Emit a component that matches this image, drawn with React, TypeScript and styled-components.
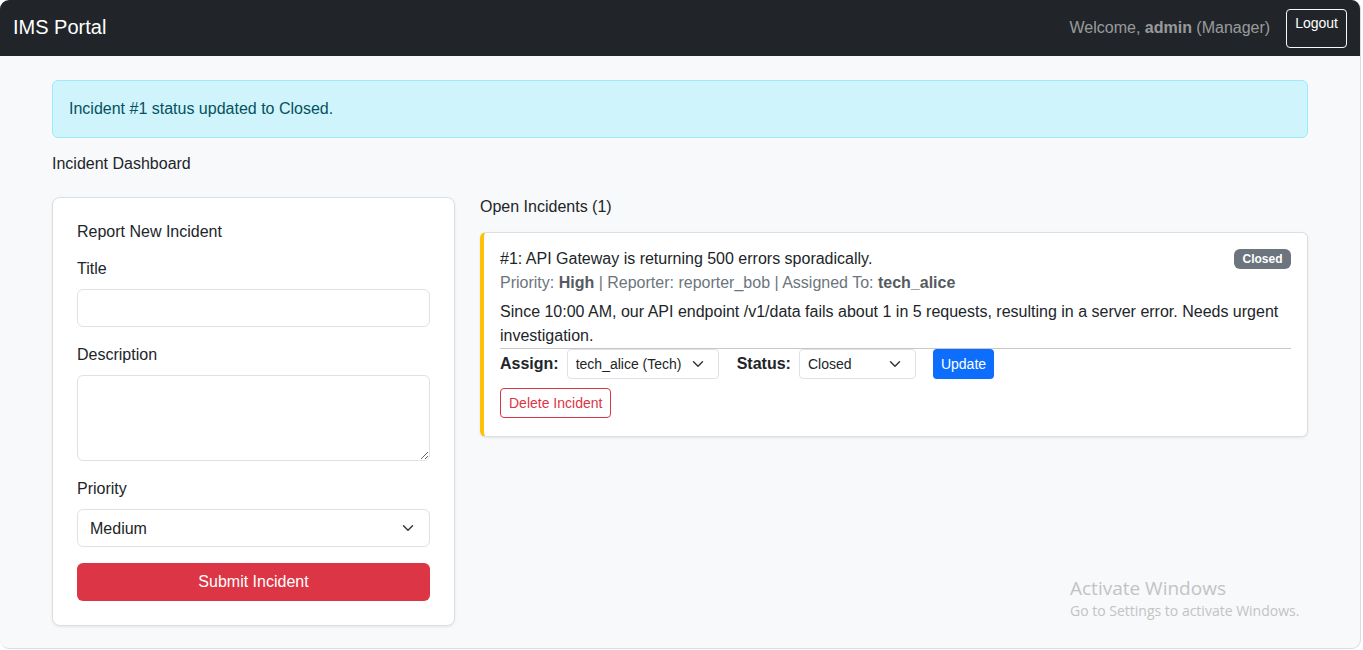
import React from "react";
import styled, { createGlobalStyle } from "styled-components";

const GlobalStyle = createGlobalStyle`
  html, body { margin: 0; padding: 0; background: #ffffff; }
  body { font-family: "Liberation Sans", Arial, sans-serif; color: #212529; }
  * { box-sizing: border-box; }
`;

const chevron =
  "url(\"data:image/svg+xml,%3csvg xmlns='http://www.w3.org/2000/svg' viewBox='0 0 16 16'%3e%3cpath fill='none' stroke='%23343a40' stroke-linecap='round' stroke-linejoin='round' stroke-width='2' d='m2 5 6 6 6-6'/%3e%3c/svg%3e\")";

const Frame = styled.div`
  position: relative;
  width: 1361px;
  height: 649px;
  background: #f8f9fa;
  border-right: 1px solid #dcdcdc;
  border-bottom: 1px solid #dcdcdc;
  border-radius: 9px;
  overflow: hidden;
  display: flex;
  flex-direction: column;
`;

const Navbar = styled.nav`
  height: 56px;
  flex: none;
  background: #212529;
  display: flex;
  align-items: center;
  justify-content: space-between;
  padding: 0 13px 0 13px;
`;

const Brand = styled.div`
  color: #ffffff;
  font-size: 20px;
  line-height: 24px;
  margin-top: -2px;
`;

const NavRight = styled.div`
  display: flex;
  align-items: center;
  gap: 16px;
`;

const NavText = styled.span`
  color: rgba(255, 255, 255, 0.55);
  font-size: 16px;
  line-height: 24px;
  b { font-weight: 700; }
`;

const LogoutButton = styled.button`
  font-family: inherit;
  font-size: 14px;
  line-height: 21px;
  color: #ffffff;
  background: transparent;
  border: 1px solid #f8f9fa;
  border-radius: 4px;
  padding: 3px 8px 13px;
`;

const Container = styled.main`
  width: 1256px;
  margin: 24px 0 0 52px;
`;

const Alert = styled.div`
  background: #cff4fc;
  border: 1px solid #9eeaf9;
  color: #055160;
  border-radius: 6px;
  padding: 16px;
  font-size: 16px;
  line-height: 24px;
  margin-bottom: 14px;
`;

const PageTitle = styled.div`
  font-size: 16px;
  line-height: 24px;
  margin-bottom: 21px;
`;

const Row = styled.div`
  display: grid;
  grid-template-columns: 403px 1fr;
  column-gap: 25px;
  align-items: start;
`;

const Card = styled.div`
  background: #ffffff;
  border: 1px solid #dcdfe2;
  border-radius: 8px;
  box-shadow: 0 1px 3px rgba(0, 0, 0, 0.08);
  padding: 24px 24px 24px;
  display: flex;
  flex-direction: column;
`;

const CardHeading = styled.div`
  font-size: 16px;
  line-height: 20px;
  margin-bottom: 15px;
`;

const Label = styled.label`
  font-size: 16px;
  line-height: 24px;
  margin-bottom: 8px;
`;

const Input = styled.input`
  height: 38px;
  width: 100%;
  border: 1px solid #dee2e6;
  border-radius: 6px;
  background: #fff;
  margin-bottom: 16px;
  font: inherit;
`;

const TextArea = styled.textarea`
  height: 86px;
  width: 100%;
  border: 1px solid #dee2e6;
  border-radius: 6px;
  background: #fff;
  margin-bottom: 16px;
  font: inherit;
  display: block;
`;

const Select = styled.select<{ $small?: boolean; $w?: number }>`
  appearance: none;
  -webkit-appearance: none;
  font-family: inherit;
  color: #212529;
  background-color: #fff;
  background-image: ${chevron};
  background-repeat: no-repeat;
  background-size: 16px 12px;
  border: 1px solid #dee2e6;
  border-radius: ${(p) => (p.$small ? "4px" : "6px")};
  font-size: ${(p) => (p.$small ? "14px" : "16px")};
  height: ${(p) => (p.$small ? "30px" : "38px")};
  padding: ${(p) => (p.$small ? "0 30px 0 8px" : "0 36px 0 12px")};
  background-position: right ${(p) => (p.$small ? "12px" : "13px")} center;
  width: ${(p) => (p.$w ? `${p.$w}px` : "100%")};
`;

const SubmitButton = styled.button`
  margin-top: 16px;
  height: 38px;
  width: 100%;
  background: #dc3545;
  border: none;
  border-radius: 6px;
  color: #fff;
  font-family: inherit;
  font-size: 16px;
`;

const RightCol = styled.section`
  display: flex;
  flex-direction: column;
`;

const SectionTitle = styled.div`
  font-size: 16px;
  line-height: 24px;
  margin: -2px 0 13px;
`;

const IncidentCard = styled.div<{ $accent: string }>`
  background: #fff;
  border: 1px solid #dcdfe2;
  border-left: 4px solid ${(p) => p.$accent};
  border-radius: 6px;
  box-shadow: 0 1px 3px rgba(0, 0, 0, 0.08);
  padding: 16px 16px 18px 16px;
  display: flex;
  flex-direction: column;
`;

const HeaderRow = styled.div`
  display: flex;
  justify-content: space-between;
  align-items: flex-start;
`;

const IncTitle = styled.div`
  font-size: 16px;
  line-height: 20px;
`;

const Badge = styled.span`
  background: #6c757d;
  color: #fff;
  font-size: 12px;
  font-weight: 700;
  line-height: 12px;
  padding: 4px 8.5px;
  border-radius: 6px;
`;

const Meta = styled.div`
  margin-top: 2px;
  color: #6c757d;
  font-size: 16px;
  line-height: 24px;
  b { color: #555b61; font-weight: 700; }
`;

const Desc = styled.p`
  margin: 5px 0 0;
  font-size: 16px;
  line-height: 24px;
`;

const Divider = styled.hr`
  margin: 0;
  border: none;
  border-top: 1px solid #c6c8ca;
`;

const Controls = styled.div`
  display: flex;
  align-items: center;
`;

const ControlLabel = styled.span<{ $gapLeft?: number }>`
  font-weight: 700;
  font-size: 16px;
  margin-right: 8px;
  margin-left: ${(p) => p.$gapLeft ?? 0}px;
`;

const UpdateButton = styled.button`
  margin-left: 17px;
  height: 30px;
  padding: 0 8px;
  background: #0d6efd;
  border: none;
  border-radius: 4px;
  color: #fff;
  font-family: inherit;
  font-size: 14px;
`;

const DeleteButton = styled.button`
  align-self: flex-start;
  margin-top: 9px;
  height: 30px;
  padding: 0 8px;
  background: #fff;
  border: 1px solid #dc3545;
  border-radius: 4px;
  color: #dc3545;
  font-family: inherit;
  font-size: 14px;
`;

const Watermark = styled.div`
  position: absolute;
  left: 1070px;
  top: 575px;
  font-family: "Open Sans", "Noto Sans", sans-serif;
  color: #c2c3c5;
  pointer-events: none;
`;

const WmTitle = styled.div`
  font-size: 19px;
  line-height: 26px;
`;

const WmSub = styled.div`
  font-size: 14px;
  line-height: 19px;
`;

export default function App() {
  return (
    <>
      <GlobalStyle />
      <Frame>
        <Navbar>
          <Brand>IMS Portal</Brand>
          <NavRight>
            <NavText>
              Welcome, <b>admin</b> (Manager)
            </NavText>
            <LogoutButton>Logout</LogoutButton>
          </NavRight>
        </Navbar>
        <Container>
          <Alert>Incident #1 status updated to Closed.</Alert>
          <PageTitle>Incident Dashboard</PageTitle>
          <Row>
            <Card>
              <CardHeading>Report New Incident</CardHeading>
              <Label>Title</Label>
              <Input />
              <Label>Description</Label>
              <TextArea />
              <Label>Priority</Label>
              <Select defaultValue="Medium">
                <option>Low</option>
                <option>Medium</option>
                <option>High</option>
              </Select>
              <SubmitButton>Submit Incident</SubmitButton>
            </Card>
            <RightCol>
              <SectionTitle>Open Incidents (1)</SectionTitle>
              <IncidentCard $accent="#ffc107">
                <HeaderRow>
                  <IncTitle>#1: API Gateway is returning 500 errors sporadically.</IncTitle>
                  <Badge>Closed</Badge>
                </HeaderRow>
                <Meta>
                  Priority: <b>High</b> | Reporter: reporter_bob | Assigned To: <b>tech_alice</b>
                </Meta>
                <Desc>
                  Since 10:00 AM, our API endpoint /v1/data fails about 1 in 5 requests, resulting in a
                  server error. Needs urgent investigation.
                </Desc>
                <Divider />
                <Controls>
                  <ControlLabel>Assign:</ControlLabel>
                  <Select $small $w={152} defaultValue="tech_alice (Tech)">
                    <option>tech_alice (Tech)</option>
                  </Select>
                  <ControlLabel $gapLeft={18}>Status:</ControlLabel>
                  <Select $small $w={117} defaultValue="Closed">
                    <option>Open</option>
                    <option>Closed</option>
                  </Select>
                  <UpdateButton>Update</UpdateButton>
                </Controls>
                <DeleteButton>Delete Incident</DeleteButton>
              </IncidentCard>
            </RightCol>
          </Row>
        </Container>
        <Watermark>
          <WmTitle>Activate Windows</WmTitle>
          <WmSub>Go to Settings to activate Windows.</WmSub>
        </Watermark>
      </Frame>
    </>
  );
}
